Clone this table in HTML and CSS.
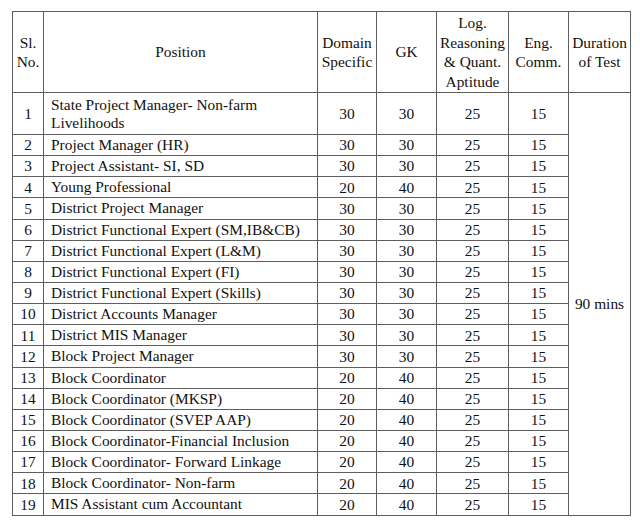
FILE: index.html
```html
<!DOCTYPE html>
<html>
<head>
<meta charset="utf-8">
<link rel="stylesheet" href="styles.css">
</head>
<body>
<table class="sched">
  <colgroup>
    <col class="c-no"><col class="c-pos"><col class="c-dom"><col class="c-gk"><col class="c-log"><col class="c-eng"><col class="c-dur">
  </colgroup>
  <thead>
    <tr class="head">
      <th>Sl.<br>No.</th>
      <th>Position</th>
      <th>Domain<br>Specific</th>
      <th>GK</th>
      <th>Log.<br>Reasoning<br>&amp; Quant.<br>Aptitude</th>
      <th>Eng.<br>Comm.</th>
      <th>Duration<br>of Test</th>
    </tr>
  </thead>
  <tbody>
    <tr class="tall"><td>1</td><td class="pos">State Project Manager- Non-farm Livelihoods</td><td>30</td><td>30</td><td>25</td><td>15</td><td class="dur" rowspan="19">90 mins</td></tr>
    <tr><td>2</td><td class="pos">Project Manager (HR)</td><td>30</td><td>30</td><td>25</td><td>15</td></tr>
    <tr><td>3</td><td class="pos">Project Assistant- SI, SD</td><td>30</td><td>30</td><td>25</td><td>15</td></tr>
    <tr><td>4</td><td class="pos">Young Professional</td><td>20</td><td>40</td><td>25</td><td>15</td></tr>
    <tr><td>5</td><td class="pos">District Project Manager</td><td>30</td><td>30</td><td>25</td><td>15</td></tr>
    <tr><td>6</td><td class="pos">District Functional Expert (SM,IB&amp;CB)</td><td>30</td><td>30</td><td>25</td><td>15</td></tr>
    <tr><td>7</td><td class="pos">District Functional Expert (L&amp;M)</td><td>30</td><td>30</td><td>25</td><td>15</td></tr>
    <tr><td>8</td><td class="pos">District Functional Expert (FI)</td><td>30</td><td>30</td><td>25</td><td>15</td></tr>
    <tr><td>9</td><td class="pos">District Functional Expert (Skills)</td><td>30</td><td>30</td><td>25</td><td>15</td></tr>
    <tr><td>10</td><td class="pos">District Accounts Manager</td><td>30</td><td>30</td><td>25</td><td>15</td></tr>
    <tr><td>11</td><td class="pos">District MIS Manager</td><td>30</td><td>30</td><td>25</td><td>15</td></tr>
    <tr><td>12</td><td class="pos">Block Project Manager</td><td>30</td><td>30</td><td>25</td><td>15</td></tr>
    <tr><td>13</td><td class="pos">Block Coordinator</td><td>20</td><td>40</td><td>25</td><td>15</td></tr>
    <tr><td>14</td><td class="pos">Block Coordinator (MKSP)</td><td>20</td><td>40</td><td>25</td><td>15</td></tr>
    <tr><td>15</td><td class="pos">Block Coordinator (SVEP AAP)</td><td>20</td><td>40</td><td>25</td><td>15</td></tr>
    <tr><td>16</td><td class="pos">Block Coordinator-Financial Inclusion</td><td>20</td><td>40</td><td>25</td><td>15</td></tr>
    <tr><td>17</td><td class="pos">Block Coordinator- Forward Linkage</td><td>20</td><td>40</td><td>25</td><td>15</td></tr>
    <tr><td>18</td><td class="pos">Block Coordinator- Non-farm</td><td>20</td><td>40</td><td>25</td><td>15</td></tr>
    <tr><td>19</td><td class="pos">MIS Assistant cum Accountant</td><td>20</td><td>40</td><td>25</td><td>15</td></tr>
  </tbody>
</table>
</body>
</html>
```

FILE: styles.css
```css
html, body {
  margin: 0;
  background: #ffffff;
}
body {
  padding: 11px 0 0 12px;
  font-family: "Liberation Serif", "Times New Roman", serif;
  font-size: 15.4px;
  color: #111111;
}
.sched {
  border-collapse: collapse;
  table-layout: fixed;
  width: 618px;
  font-family: "Liberation Serif", serif;
}
.c-no { width: 31px; }
.c-pos { width: 274px; }
.c-dom { width: 59px; }
.c-gk { width: 60px; }
.c-log { width: 72px; }
.c-eng { width: 60px; }
.c-dur { width: 62px; }
.sched th,
.sched td {
  border: 1px solid #5e5e5e;
  padding: 0;
  text-align: center;
  vertical-align: middle;
  font-weight: normal;
  line-height: 19.5px;
}
.head { height: 81px; }
.sched tbody tr { height: 21.15px; }
.sched tbody tr.tall { height: 42px; }
.sched td.pos {
  text-align: left;
  padding-left: 7px;
  line-height: 18px;
}
.sched td.dur { vertical-align: middle; }
```
